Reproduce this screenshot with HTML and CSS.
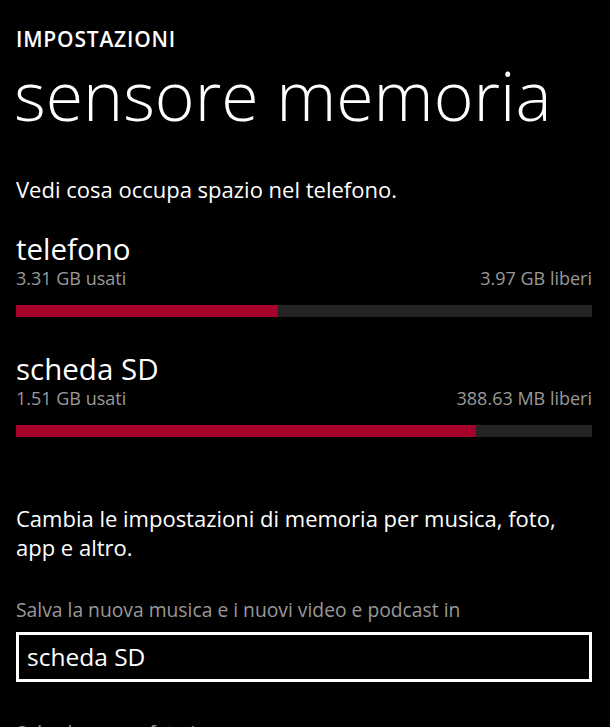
FILE: index.html
```html
<!DOCTYPE html>
<html lang="it">
  <head>
    <meta charset="UTF-8" />
    <meta name="viewport" content="width=device-width, initial-scale=1.0" />
    <title>Sensore memoria</title>

    <link rel="stylesheet" href="styles.css">
  </head>
  <body>
    <div class="page">
      <div class="app-title">IMPOSTAZIONI</div>
      <h1 class="page-title">sensore memoria</h1>

      <p class="intro">Vedi cosa occupa spazio nel telefono.</p>

      <div class="storage">
        <div class="storage-name">telefono</div>
        <div class="storage-info">
          <span>3.31 GB usati</span>
          <span>3.97 GB liberi</span>
        </div>
        <div class="bar">
          <div class="bar-used" style="width: 45.5%"></div>
        </div>
      </div>

      <div class="storage">
        <div class="storage-name">scheda SD</div>
        <div class="storage-info">
          <span>1.51 GB usati</span>
          <span>388.63 MB liberi</span>
        </div>
        <div class="bar">
          <div class="bar-used" style="width: 79.9%"></div>
        </div>
      </div>

      <p class="settings-text">Cambia le impostazioni di memoria per musica, foto, app e altro.</p>

      <div class="field">
        <label class="field-label">Salva la nuova musica e i nuovi video e podcast in</label>
        <div class="picker">scheda SD</div>
      </div>

      <div class="field">
        <label class="field-label">Salva le nuove foto in</label>
        <div class="picker">scheda SD</div>
      </div>
    </div>
  </body>
</html>
```

FILE: styles.css
```css
html,
body {
  height: 100%;
}

body {
  margin: 0;
  background-color: #000;
  color: #fff;
  font-family: "Open Sans", "Noto Sans", sans-serif;
  overflow: hidden;
}

.page {
  padding: 27px 18px 0 16px;
}

.app-title {
  font-size: 21px;
  font-weight: 600;
  line-height: 24px;
  letter-spacing: 0.8px;
}

.page-title {
  margin: 8px 0 0 -2px;
  font-size: 68px;
  font-weight: 300;
  line-height: 72px;
}

.intro {
  margin: 44px 0 0;
  font-size: 22px;
  line-height: 28px;
}

.storage {
  margin-top: 29px;
}

.storage + .storage {
  margin-top: 35px;
}

.storage-name {
  font-size: 29.5px;
  line-height: 34px;
}

.storage-info {
  display: flex;
  justify-content: space-between;
  font-size: 18px;
  line-height: 24px;
  color: #999;
}

.bar {
  height: 12px;
  margin-top: 15px;
  background-color: #242424;
}

.bar-used {
  height: 100%;
  background-color: #a4002a;
}

.settings-text {
  max-width: 560px;
  margin: 67px 0 0;
  font-size: 22px;
  line-height: 29px;
}

.field {
  margin-top: 36px;
}

.field + .field {
  margin-top: 39px;
}

.field-label {
  display: block;
  font-size: 19.3px;
  line-height: 24px;
  color: #999;
}

.picker {
  margin-top: 10px;
  height: 44px;
  padding: 0 8px;
  border: 3px solid #fff;
  font-size: 24.5px;
  line-height: 44px;
}
```
